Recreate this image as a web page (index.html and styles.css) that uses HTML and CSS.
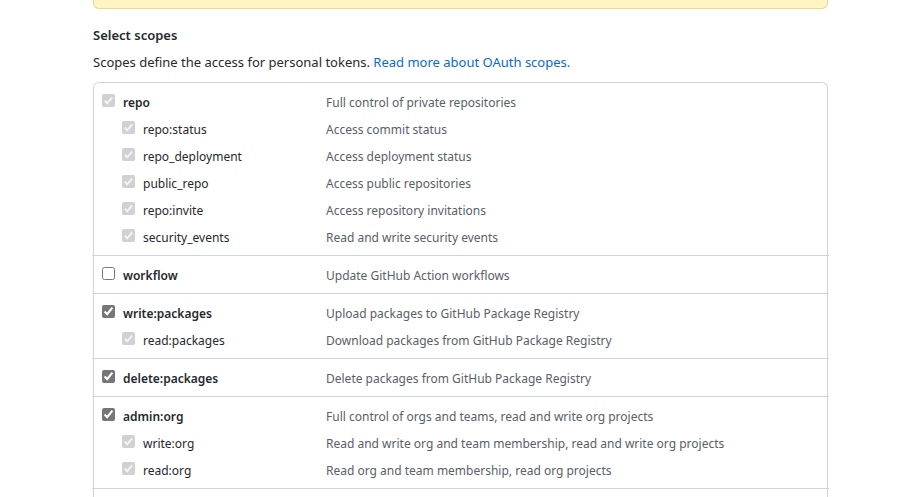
FILE: index.html
```html
<!DOCTYPE html>
<html lang="en">
<head>
<meta charset="utf-8">
<meta name="viewport" content="width=device-width, initial-scale=1">
<title>Select scopes</title>
<link rel="stylesheet" href="styles.css">
</head>
<body>
<main class="page">
  <div class="flash"></div>
  <h2 class="heading">Select scopes</h2>
  <p class="intro">Scopes define the access for personal tokens. <a href="#">Read more about OAuth scopes.</a></p>
  <ul class="scopes">
    <li class="group">
      <div class="scope"><label class="name"><input type="checkbox" checked disabled>repo</label><span class="about">Full control of private repositories</span></div>
      <div class="scope child"><label class="name"><input type="checkbox" checked disabled>repo:status</label><span class="about">Access commit status</span></div>
      <div class="scope child"><label class="name"><input type="checkbox" checked disabled>repo_deployment</label><span class="about">Access deployment status</span></div>
      <div class="scope child"><label class="name"><input type="checkbox" checked disabled>public_repo</label><span class="about">Access public repositories</span></div>
      <div class="scope child"><label class="name"><input type="checkbox" checked disabled>repo:invite</label><span class="about">Access repository invitations</span></div>
      <div class="scope child"><label class="name"><input type="checkbox" checked disabled>security_events</label><span class="about">Read and write security events</span></div>
    </li>
    <li class="group">
      <div class="scope"><label class="name"><input type="checkbox">workflow</label><span class="about">Update GitHub Action workflows</span></div>
    </li>
    <li class="group">
      <div class="scope"><label class="name"><input type="checkbox" checked>write:packages</label><span class="about">Upload packages to GitHub Package Registry</span></div>
      <div class="scope child"><label class="name"><input type="checkbox" checked disabled>read:packages</label><span class="about">Download packages from GitHub Package Registry</span></div>
    </li>
    <li class="group">
      <div class="scope"><label class="name"><input type="checkbox" checked>delete:packages</label><span class="about">Delete packages from GitHub Package Registry</span></div>
    </li>
    <li class="group">
      <div class="scope"><label class="name"><input type="checkbox" checked>admin:org</label><span class="about">Full control of orgs and teams, read and write org projects</span></div>
      <div class="scope child"><label class="name"><input type="checkbox" checked disabled>write:org</label><span class="about">Read and write org and team membership, read and write org projects</span></div>
      <div class="scope child"><label class="name"><input type="checkbox" checked disabled>read:org</label><span class="about">Read org and team membership, read org projects</span></div>
    </li>
    <li class="group"></li>
  </ul>
</main>
</body>
</html>
```
FILE: styles.css
```css
* { box-sizing: border-box; }
html { overflow: hidden; }
body {
  margin: 0;
  background: #fff;
  color: #24292e;
  font: 13px/20px "Segoe UI", "Noto Sans", sans-serif;
}
.page { padding: 0 95px 0 93px; }
.flash {
  height: 9px;
  background: #fff5c2;
  border: 1px solid #ecd88a;
  border-top: 0;
  border-radius: 0 0 6px 6px;
}
.heading { margin: 16px 0 7px; font-size: 13px; font-weight: 600; line-height: 20px; }
.intro { margin: 0 0 10px; }
.intro a { color: #0969da; text-decoration: none; }
.scopes {
  margin: 0;
  padding: 0;
  list-style: none;
  border: 1px solid #d0d4df;
  border-bottom: 0;
  border-radius: 6px 6px 0 0;
}
.group { padding: 5px 8px; }
.group + .group { margin: 0 -2px; padding: 5px 10px; border-top: 1px solid #d0d4df; }
.scope { display: flex; min-height: 27px; padding-top: 5px; font-size: 12px; }
.name { display: flex; flex: 0 0 224px; align-items: flex-start; gap: 8px; font-weight: 600; }
.child .name { flex-basis: 204px; font-weight: 400; }
.child { padding-left: 20px; }
.name input { width: 13px; height: 13px; margin: 1px 0 0; accent-color: #767676; }
.name input:disabled {
  appearance: none;
  border-radius: 2px;
  background: #d1d1d1 url("data:image/svg+xml,%3Csvg xmlns='http://www.w3.org/2000/svg' viewBox='0 0 13 13'%3E%3Cpath d='M2.8 6.8 5.2 9.2 10.2 3.4' fill='none' stroke='%23f3f3f3' stroke-width='2'/%3E%3C/svg%3E") center / 13px no-repeat;
}
.about { color: #586069; }
```
